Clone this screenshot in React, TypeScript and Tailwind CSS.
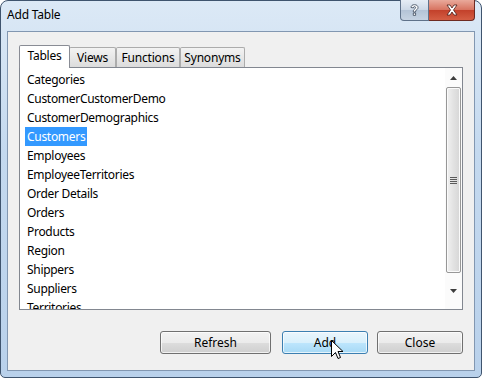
import React from 'react';

const FONT = { fontFamily: '"Noto Sans", "Open Sans", sans-serif' };

const tables = [
  'Categories',
  'CustomerCustomerDemo',
  'CustomerDemographics',
  'Customers',
  'Employees',
  'EmployeeTerritories',
  'Order Details',
  'Orders',
  'Products',
  'Region',
  'Shippers',
  'Suppliers',
  'Territories',
];

const tabs = [
  { label: 'Tables', w: 'w-[51px]' },
  { label: 'Views', w: 'w-[47px]' },
  { label: 'Functions', w: 'w-[64px]' },
  { label: 'Synonyms', w: 'w-[65px]' },
];

const Button: React.FC<{ label: string; hot?: boolean; className?: string }> = ({ label, hot, className }) => (
  <div
    className={`h-[23px] rounded-[3px] border flex items-center justify-center text-[12px] text-black ${
      hot
        ? 'border-[#3c7fb1] bg-[linear-gradient(to_bottom,#eaf6fd_0%,#d9f0fc_50%,#bee6fd_50%,#a7d9f5_100%)]'
        : 'border-[#707070] bg-[linear-gradient(to_bottom,#f2f2f2_0%,#ebebeb_50%,#dddddd_50%,#cfcfcf_100%)]'
    } shadow-[inset_0_0_0_1px_rgba(255,255,255,0.7)] ${className ?? ''}`}
  >
    {label}
  </div>
);

const App: React.FC = () => {
  return (
    <div className="w-[482px] h-[381px] bg-white relative overflow-hidden" style={FONT}>
      <div className="h-[378px] border border-[#3f546e] rounded-t-[8px] rounded-b-[5px] bg-[linear-gradient(to_bottom,#dce9f6_0%,#c4d9ef_40%,#b9d1eb_100%)] flex flex-col">
        {/* title bar */}
        <div className="h-[30px] flex items-start justify-between">
          <div className="pl-[6px] pt-[5px] text-[12px] text-black tracking-[-0.2px]">Add Table</div>
          <div className="flex mr-[6px] -mt-px">
            <div className="w-[29px] h-[21px] border border-[#5f728a] border-t-0 rounded-bl-[4px] bg-[linear-gradient(to_bottom,#e6edf5_0%,#ccd8e6_50%,#b3c3d6_50%,#c6d3e2_100%)] flex items-center justify-center">
              <svg width="9" height="13" viewBox="0 0 9 13">
                <path
                  d="M1 3.5 C1 1.5 2.5 0.7 4.5 0.7 C6.7 0.7 8 1.8 8 3.6 C8 5.2 6.6 5.8 5.9 6.4 C5.5 6.8 5.6 7.3 5.6 8 L3.3 8 C3.3 6.6 3.4 6 4.4 5.2 C5.2 4.6 5.6 4.3 5.6 3.6 C5.6 3 5.2 2.6 4.5 2.6 C3.8 2.6 3.4 3.1 3.4 3.9 Z M3.3 9 L5.6 9 L5.6 11.4 L3.3 11.4 Z"
                  fill="#ffffff"
                  stroke="#3a4658"
                  strokeWidth="0.8"
                  strokeLinejoin="round"
                />
              </svg>
            </div>
            <div className="w-[46px] h-[21px] border border-[#6d2a22] border-t-0 border-l-0 rounded-br-[4px] bg-[linear-gradient(to_bottom,#e9a99b_0%,#d7725f_50%,#c2402a_50%,#d45e44_100%)] flex items-center justify-center">
              <svg width="14" height="12" viewBox="0 0 14 12">
                <path
                  d="M2 1 L5 1 L7 4 L9 1 L12 1 L8.5 6 L12 11 L9 11 L7 8 L5 11 L2 11 L5.5 6 Z"
                  fill="#ffffff"
                  stroke="#4a1c16"
                  strokeWidth="0.8"
                  strokeLinejoin="round"
                />
              </svg>
            </div>
          </div>
        </div>

        {/* client area */}
        <div className="mx-[6px] h-[340px] border border-[#8297b1] bg-[#f0f0f0] pt-[13px] pl-[11px] pr-[10px] flex flex-col">
          <div className="flex items-end h-[22px] tracking-[-0.2px]">
            {tabs.map((t, i) =>
              i === 0 ? (
                <div
                  key={t.label}
                  className={`${t.w} h-[23px] -mb-px z-10 bg-white border border-[#898c95] border-b-0 rounded-t-[2px] flex items-center justify-center text-[12px] pb-[3px]`}
                >
                  {t.label}
                </div>
              ) : (
                <div
                  key={t.label}
                  className={`${t.w} h-[20px] border border-[#acacac] border-b-0 rounded-t-[2px] bg-[linear-gradient(to_bottom,#f3f3f3,#dcdcdc)] flex items-center justify-center text-[12px] ${
                    i === 1 ? '-ml-px' : ''
                  }`}
                >
                  {t.label}
                </div>
              )
            )}
          </div>

          {/* list */}
          <div className="h-[243px] w-[444px] border border-[#828790] bg-white flex overflow-hidden">
            <div className="flex-1 pt-[2px] pl-[5px] overflow-hidden tracking-[-0.3px]">
              {tables.map((name, i) => (
                <div key={name} className="h-[19px] flex items-center">
                  <span
                    className={`px-[2px] h-[19px] leading-[19px] text-[12px] ${
                      i === 3 ? 'bg-[#3399ff] text-white' : 'text-black'
                    }`}
                  >
                    {name}
                  </span>
                </div>
              ))}
            </div>
            <div className="w-[17px] bg-[#fbfbfb] flex flex-col items-center">
              <div className="h-[19px] flex items-center justify-center">
                <svg width="7" height="4" viewBox="0 0 7 4">
                  <path d="M3.5 0 L7 4 L0 4 Z" fill="#3d3d3d" />
                </svg>
              </div>
              <div className="w-[15px] h-[186px] rounded-[2px] border border-[#979797] bg-[linear-gradient(to_right,#f1f1f1,#e2e2e2_50%,#d6d6d6)] shadow-[inset_0_0_0_1px_#fafafa] flex items-center justify-center">
                <div className="flex flex-col gap-[1px]">
                  <div className="w-[7px] h-px bg-[#5a5a5a]" />
                  <div className="w-[7px] h-px bg-[#5a5a5a]" />
                  <div className="w-[7px] h-px bg-[#5a5a5a]" />
                  <div className="w-[7px] h-px bg-[#5a5a5a]" />
                </div>
              </div>
              <div className="flex-1 flex items-center justify-center">
                <svg width="7" height="4" viewBox="0 0 7 4">
                  <path d="M0 0 L7 0 L3.5 4 Z" fill="#3d3d3d" />
                </svg>
              </div>
            </div>
          </div>

          {/* buttons */}
          <div className="flex justify-end mt-[21px] pr-[1px]">
            <Button label="Refresh" className="w-[111px] mr-[11px]" />
            <Button label="Add" hot className="w-[86px] mr-[9px]" />
            <Button label="Close" className="w-[86px]" />
          </div>
        </div>
      </div>

      {/* mouse cursor */}
      <svg className="absolute left-[331px] top-[340px]" width="13" height="21" viewBox="0 0 13 21">
        <path
          d="M0.5 0.5 L0.5 16.5 L4.5 12.5 L7 18.5 L9.5 17.5 L7 11.5 L12 11.5 Z"
          fill="#ffffff"
          stroke="#000000"
          strokeWidth="1"
          strokeLinejoin="miter"
        />
      </svg>
    </div>
  );
};

export default App;
